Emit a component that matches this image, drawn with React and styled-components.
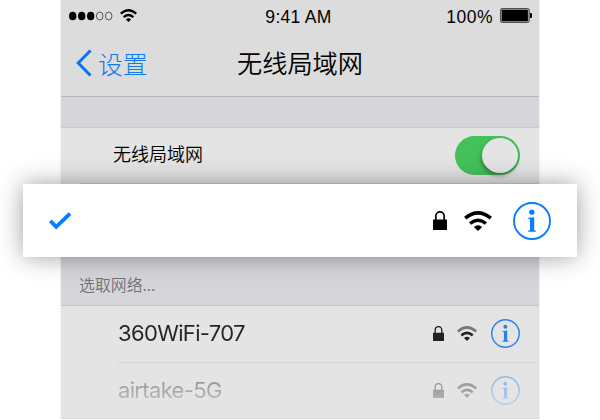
import React from "react";
import styled, { createGlobalStyle } from "styled-components";

const GlobalStyle = createGlobalStyle`
  * { box-sizing: border-box; }
  body { margin: 0; background: #fff; overflow: hidden; }
`;

const Phone = styled.main`
  width: 478px;
  height: 419px;
  margin: 0 auto;
  background: #d5d5da;
  box-shadow: 0 0 2px rgba(0, 0, 0, 0.12);
  font-family: "Liberation Sans", "Noto Sans CJK SC", sans-serif;
  color: #000;
`;

const Header = styled.header`
  height: 97px;
  background: #dcdcdc;
  border-bottom: 1px solid #b9b8c0;
`;

const StatusBar = styled.div`
  display: grid;
  grid-template-columns: 1fr auto 1fr;
  align-items: center;
  height: 33px;
  padding: 0 7px 0 8px;
  font-size: 17.5px;
  line-height: 33px;
`;

const StatusGroup = styled.div`
  display: flex;
  align-items: center;
  justify-content: ${(p) => (p.$end ? "flex-end" : "flex-start")};
  gap: 7px;
  height: 30px;
  padding-bottom: 3px;
`;

const Clock = styled.time`
  margin: 1px 4px 0 0;
  letter-spacing: 0.3px;
`;

const Percent = styled.span`
  letter-spacing: 0.5px;
  line-height: 34px;
  padding-top: 3px;
`;

const NavBar = styled.nav`
  display: grid;
  grid-template-columns: 1fr auto 1fr;
  align-items: center;
  height: 60px;
  padding: 0 15px 2px;
`;

const BackLink = styled.span`
  display: flex;
  align-items: center;
  gap: 6px;
  padding-top: 2px;
  color: #1379ee;
  font: 300 24.8px/36px "Noto Sans CJK SC", sans-serif;
`;

const Title = styled.h1`
  margin: 0;
  font: 350 25.2px/36px "Noto Sans CJK SC", sans-serif;
`;

const Gap = styled.div`
  height: 31px;
  border-bottom: 1px solid #c9c9cd;
`;

const ToggleRow = styled.section`
  display: flex;
  align-items: center;
  justify-content: space-between;
  height: 56px;
  padding: 0 19px 1px 52px;
  background: linear-gradient(#d0d0d0, #d0d0d0) 19px 100% / 100% 1px no-repeat #e4e4e4;
  font: 350 18px/26px "Noto Sans CJK SC", sans-serif;
`;

const ToggleLabel = styled.span`
  padding-bottom: 5px;
`;

const Switch = styled.span`
  display: flex;
  justify-content: flex-end;
  width: 65px;
  height: 39px;
  padding: 2px;
  border-radius: 20px;
  background: #45c15b;
`;

const Knob = styled.span`
  width: 36px;
  height: 35px;
  border-radius: 50%;
  background: #e4e4e4;
  box-shadow: -1px 3px 4px rgba(0, 0, 0, 0.32);
`;

const ConnectedCard = styled.section`
  position: relative;
  display: flex;
  align-items: center;
  justify-content: space-between;
  height: 73px;
  margin: 0 -38px;
  padding: 0 26px 0 26px;
  background: #fff;
  box-shadow: 0 0 23px rgba(0, 0, 0, 0.38);
`;

const IconGroup = styled.div`
  display: flex;
  align-items: center;
  gap: ${(p) => p.$gap}px;
`;

const SectionLabel = styled.h2`
  height: 49px;
  margin: 0;
  padding: 16px 18px 0;
  border-bottom: 1px solid #c5c5ca;
  color: #727276;
  font: 350 15.9px/24px "Noto Sans CJK SC", sans-serif;
`;

const NetworkList = styled.ul`
  height: 113px;
  margin: 0;
  padding: 0 0 0 57px;
  list-style: none;
  background: #e4e4e4;
  border: solid #dcdcde;
  border-width: 0 1px 1px 0;
`;

const NetworkRow = styled.li`
  display: flex;
  align-items: center;
  justify-content: space-between;
  height: 57px;
  padding: 0 18px 1px 0;
  border-bottom: 1px solid ${(p) => (p.$faded ? "transparent" : "#d3d3d5")};
`;

const NetworkName = styled.span`
  color: transparent;
  background: ${(p) => (p.$faded ? "linear-gradient(#969696 20%, #bebebe 85%)" : "#242424")};
  background-clip: text;
  font: 400 22px/32px Inter, sans-serif;
  letter-spacing: -0.66px;
  padding-bottom: 1px;
`;

const NetworkIcons = styled(IconGroup)`
  mask-image: ${(p) => (p.$faded ? "linear-gradient(rgba(0,0,0,.46), rgba(0,0,0,.22))" : "none")};
`;

const Icon = styled.svg`
  display: block;
  flex: none;
`;

function Signal() {
  return (
    <Icon width="44" height="10" viewBox="0 0 44 10">
      {[3.7, 12.7, 21.7].map((x) => (
        <ellipse key={x} cx={x} cy="5" rx="3.7" ry="4.3" />
      ))}
      {[30.7, 39.7].map((x) => (
        <ellipse key={x} cx={x} cy="5" rx="3.3" ry="4" fill="none" stroke="#333" strokeWidth=".8" />
      ))}
    </Icon>
  );
}

function Wifi({ width, height, outer = "#000", inner = "#000" }) {
  return (
    <Icon width={width} height={height} viewBox="0 0 28 20" preserveAspectRatio="none">
      <g fill="none" strokeWidth="3.5">
        <path d="M1.2 7.2Q14-3.5 26.8 7.2" stroke={outer} />
        <path d="M6 12.5Q14 6 22 12.5" stroke={inner} />
      </g>
      <path d="M9.8 16Q14 12.6 18.2 16L14 20Z" fill={inner} />
    </Icon>
  );
}

function Battery() {
  return (
    <Icon width="32" height="15" viewBox="0 0 32 15">
      <rect x=".6" y=".6" width="28.6" height="13.8" rx="1.5" fill="#b8b8b8" stroke="#444" />
      <rect x="1.7" y="1.7" width="26.2" height="11.6" rx=".6" />
      <path d="M30 5h1.2q.8 0 .8.8v3.4q0 .8-.8.8H30z" />
    </Icon>
  );
}

function Lock({ width, height, color = "#000" }) {
  return (
    <Icon width={width} height={height} viewBox="0 0 14 19" preserveAspectRatio="none">
      <path d="M2.8 9V5a4.2 4.2 0 0 1 8.4 0v4" fill="none" stroke={color} strokeWidth="1.7" />
      <rect y="8.5" width="14" height="10.5" rx=".4" fill={color} />
    </Icon>
  );
}

function Info({ size, color }) {
  return (
    <Icon width={size} height={size} viewBox="0 0 38 38" fill={color}>
      <circle cx="19" cy="19" r="18" fill="none" stroke={color} strokeWidth="1.9" />
      <circle cx="18.8" cy="10.2" r="2.6" />
      <path d="M15.2 15.8L21.2 15.2V28.2L22.8 28.6V29.8H15.2V28.6L17 28.2V17.2L15.2 16.8Z" />
    </Icon>
  );
}

function Network({ name, faded }) {
  return (
    <NetworkRow $faded={faded}>
      <NetworkName $faded={faded}>{name}</NetworkName>
      <NetworkIcons $gap={14} $faded={faded}>
        <IconGroup $gap={13}>
          <Lock width={11} height={15} color="#222" />
          <Wifi width={20} height={15} outer={faded ? "#333" : "#777"} inner="#222" />
        </IconGroup>
        <Info size={29} color="#2683ed" />
      </NetworkIcons>
    </NetworkRow>
  );
}

export default function App() {
  return (
    <>
      <GlobalStyle />
      <Phone>
        <Header>
          <StatusBar>
            <StatusGroup>
              <Signal />
              <Wifi width={17} height={13} />
            </StatusGroup>
            <Clock>9:41 AM</Clock>
            <StatusGroup $end>
              <Percent>100%</Percent>
              <Battery />
            </StatusGroup>
          </StatusBar>
          <NavBar>
            <BackLink>
              <Icon width="16" height="28" viewBox="0 0 16 28">
                <path d="M14.5 1.5L2.2 14l12.3 12.5" fill="none" stroke="#0874f4" strokeWidth="3" />
              </Icon>
              设置
            </BackLink>
            <Title>无线局域网</Title>
          </NavBar>
        </Header>
        <Gap />
        <ToggleRow>
          <ToggleLabel>无线局域网</ToggleLabel>
          <Switch>
            <Knob />
          </Switch>
        </ToggleRow>
        <ConnectedCard>
          <Icon width="23" height="18" viewBox="0 0 23 18">
            <path d="M1.3 8.9L7.2 14.8L21 1.7" fill="none" stroke="#087dff" strokeWidth="3.9" />
          </Icon>
          <IconGroup $gap={21}>
            <IconGroup $gap={17}>
              <Lock width={14} height={19} />
              <Wifi width={28} height={20} />
            </IconGroup>
            <Info size={38} color="#087dff" />
          </IconGroup>
        </ConnectedCard>
        <SectionLabel>选取网络...</SectionLabel>
        <NetworkList>
          <Network name="360WiFi-707" />
          <Network name="airtake-5G" faded />
        </NetworkList>
      </Phone>
    </>
  );
}
